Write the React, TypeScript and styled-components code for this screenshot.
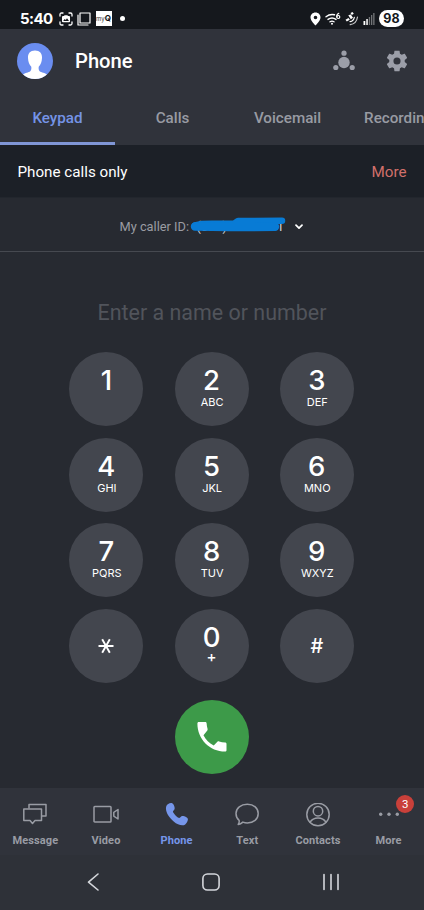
import React from 'react';
import styled, { createGlobalStyle } from 'styled-components';

const GlobalStyle = createGlobalStyle`
  * { box-sizing: border-box; }
  body { margin: 0; background: #272a31; font-family: Roboto, "Liberation Sans", sans-serif; overflow: hidden; }
  button { border: 0; padding: 0; margin: 0; background: none; color: inherit; font: inherit; }
  svg { display: block; flex: none; }
`;

const Screen = styled.main`
  width: 424px; height: 910px; overflow: hidden;
  display: flex; flex-direction: column;
  background: #272a31; color: #fff;
`;

const StatusBar = styled.div`
  height: 29px; flex: none; background: #15181d;
  display: flex; justify-content: space-between; align-items: flex-start;
  padding: 9px 20px 0 20px;
`;
const StatusGroup = styled.div<{ $gap: number }>`
  display: flex; align-items: center; gap: ${p => p.$gap}px; height: 19px;
`;
const Clock = styled.span`
  font: 700 15px/19px Inter, sans-serif; width: 34px; letter-spacing: -0.6px; white-space: nowrap;
`;
const AppBadge = styled.span`
  width: 16px; height: 15px; background: #fff; color: #333; display: flex;
  align-items: center; justify-content: center; font: 400 6px/15px Inter, sans-serif;
  b { font-size: 8px; color: #111; }
`;
const Dot = styled.span`
  width: 5px; height: 5px; border-radius: 50%; background: #fff; margin-left: 4px;
`;
const Battery = styled.span`
  width: 25px; height: 17px; border-radius: 9px; background: #fff; color: #15181d;
  font: 700 12.5px/17px Inter, sans-serif; text-align: center;
`;

const Header = styled.header`
  height: 65px; flex: none; background: #30333b;
  display: flex; align-items: center; padding: 0 16px 2px 17px;
`;
const Title = styled.h1`
  margin: 0 auto 0 22px; font-size: 20.2px; line-height: 24px; font-weight: 500;
`;
const HeaderActions = styled.div`
  display: flex; align-items: center; gap: 31px;
`;

const Tabs = styled.nav`
  height: 51px; flex: none; background: #30333b; display: flex;
`;
const Tab = styled.button<{ $active?: boolean }>`
  width: 115px; height: 51px; flex: none; text-align: center; white-space: nowrap;
  font-size: 15.2px; font-weight: 500; line-height: 48px;
  color: ${p => (p.$active ? '#7594e6' : '#989ba3')};
  border-bottom: 3px solid ${p => (p.$active ? '#8096d6' : 'transparent')};
`;

const Notice = styled.section`
  height: 53px; flex: none; background: #1c2027; padding: 2px 17.5px 0;
  display: flex; align-items: center; justify-content: space-between;
  font-size: 15.2px; border-bottom: 1px solid #22262d;
`;
const NoticeLink = styled.button`color: #d2706b;`;

const CallerRow = styled.section`
  height: 54px; flex: none; display: flex; align-items: center;
  padding: 4px 0 0 119.5px; border-bottom: 1px solid #464950;
  font-size: 12.8px; color: #9a9ca2; white-space: nowrap;
`;
const CallerLabel = styled.span`width: 69px;`;
const CallerNumber = styled.span`
  position: relative; width: 106px; height: 18px; padding-left: 8px;
  line-height: 18px; color: #d5d7dc;
  svg { position: absolute; left: 1px; top: -1px; }
`;

const Entry = styled.div`
  height: 100px; flex: none; padding-top: 48px; text-align: center;
  font-size: 21.45px; line-height: 26px; color: #51545b; white-space: nowrap;
`;
const Pad = styled.section`
  display: grid; grid-template-columns: repeat(3, 74px); grid-auto-rows: 74px;
  gap: 11.7px 31.2px; padding-left: 69.4px; flex: none;
  font-family: Inter, sans-serif;
`;
const Key = styled.button<{ $symbol?: boolean }>`
  width: 74px; height: 74px; border-radius: 50%; background: #43464e;
  display: flex; flex-direction: column; align-items: center;
  padding-top: ${p => (p.$symbol ? 0 : 13)}px;
  justify-content: ${p => (p.$symbol ? 'center' : 'flex-start')};
`;
const Digit = styled.span`font-size: 27.5px; line-height: 30px; font-weight: 500;`;
const Letters = styled.span`font-size: 11px; line-height: 14px; padding-left: 1px;`;
const Hash = styled.span`font-size: 20px; line-height: 24px; font-weight: 500;`;
const PlusLabel = styled.span`font-size: 15px; line-height: 9px; font-weight: 500;`;

const CallArea = styled.section`
  flex: 1; display: flex; justify-content: center; padding-top: 16.800px;
`;
const CallButton = styled.button`
  width: 74.5px; height: 74.5px; border-radius: 50%; background: #3d9a49;
  display: flex; align-items: center; justify-content: center;
`;

const BottomNav = styled.nav`
  height: 67px; flex: none; background: #30333b; display: grid;
  grid-template-columns: repeat(6, 70.67px);
`;
const NavItem = styled.button<{ $active?: boolean }>`
  position: relative; display: flex; flex-direction: column; align-items: center;
  padding-top: 14.500px; gap: 7.500px; font-size: 11px; line-height: 14px; font-weight: 700;
  letter-spacing: 0.1px; color: ${p => (p.$active ? '#7696ea' : '#999ca4')};
`;
const Count = styled.span`
  position: absolute; left: 43px; top: 7px; width: 18px; height: 18px; border-radius: 50%;
  background: #c9403a; color: #fff; font-size: 11.5px; line-height: 18px; font-weight: 400;
  text-align: center;
`;
const SystemNav = styled.footer`
  height: 55px; flex: none; background: #2e3138; display: flex;
  align-items: flex-start; padding: 17px 0 0 86px; gap: 102px;
`;

const Icon = ({ w, h = w, box, children }: { w: number; h?: number; box?: string; children: React.ReactNode }) => (
  <svg width={w} height={h} viewBox={box || `0 0 ${w} ${h}`} fill="none" stroke="currentColor" strokeLinecap="round" strokeLinejoin="round">
    {children}
  </svg>
);

const StatusIcons = () => (
  <>
    <Icon w={14}><g strokeWidth="1.3"><path d="M1 4V2.5Q1 1 2.5 1H4M10 1h1.500Q13 1 13 2.500V4M13 10v1.500Q13 13 11.500 13H10M4 13H2.500Q1 13 1 11.500V10" /></g><path fill="#fff" stroke="none" fillRule="evenodd" d="M4.500 4H5l.6-.7h2.800L9 4h1q1 0 1 1v4.500q0 .8-1 .8H4q-1 0-1-.8V5q0-1 1-1Zm-.3 5h5.800L8 6.300 6.800 8 5.700 7Z" /></Icon>
    <Icon w={14}><path strokeWidth="1.200" d="M3 1h10v10H3ZM1 3v10h10" /></Icon>
  </>
);

const Messages = () => <Icon w={24}><g strokeWidth="1.500"><path d="M6 5V1.500h17V13h-4" /><path d="M.8 6h17.700v11.500H12l-2.500 3-2.500-3H.8Z" /></g></Icon>;
const Video = () => <Icon w={26} h={24}><g strokeWidth="1.500"><rect x="1" y="3.500" width="17" height="15.500" rx=".8" /><path d="m20.800 9.300 4.200-2.800v9.500l-4.200-2.800Z" /></g></Icon>;
const NavPhone = () => <Icon w={24}><path fill="currentColor" stroke="none" d="M2.800 1.200C4.300.2 5.600-.1 6.700.1c1.200.2 2.300 2.100 2.800 4 .5 2-.2 2.900-1.300 3.800-.5.5-.2 1.200.4 2.100 1.300 2 2.500 3.200 4.300 4.500.9.600 1.700.7 2.200 0 .8-1.100 1.700-1.900 3.400-1.500 2.100.5 4.200 1.700 4.400 2.900.200 1.600-1 4.300-2.700 5.500-2.600 1.900-7.500.5-11.500-3C4.400 15 1.300 10.300 1 6.300.8 4.400 1.300 2.200 2.800 1.200Z" /></Icon>;
const Bubble = () => <Icon w={24}><path strokeWidth="1.500" d="M12.300 1.300c6.500 0 10.900 3.700 10.900 9.200 0 5.700-4.700 9.400-10.900 9.400-1.600 0-3.100-.3-4.400-.8-1.700 1.600-3 2.200-4.700 2.400 1-1.500 1.200-2.800.9-4.200C2 15.600 1 13.500 1 10.500c0-5.500 4.900-9.200 11.300-9.200Z" /></Icon>;
const Person = () => <Icon w={24}><g strokeWidth="1.500"><circle cx="12" cy="11.500" r="11.200" /><circle cx="12" cy="8.200" r="4.700" /><path d="M4 19.300c1.800-3 4.400-4.300 8-4.300s6.200 1.300 8 4.300" /></g></Icon>;
const Dots = () => <Icon w={24}><g fill="currentColor" stroke="none"><circle cx="3.700" cy="11.300" r="1.700" /><circle cx="12" cy="11.300" r="1.700" /><circle cx="20.300" cy="11.300" r="1.700" /></g></Icon>;

const keys = [['1', ''], ['2', 'ABC'], ['3', 'DEF'], ['4', 'GHI'], ['5', 'JKL'], ['6', 'MNO'], ['7', 'PQRS'], ['8', 'TUV'], ['9', 'WXYZ']];
const destinations = [
  { label: 'Message', icon: <Messages /> },
  { label: 'Video', icon: <Video /> },
  { label: 'Phone', icon: <NavPhone />, active: true },
  { label: 'Text', icon: <Bubble /> },
  { label: 'Contacts', icon: <Person /> },
  { label: 'More', icon: <Dots />, count: 3 },
];

export default function App() {
  return (
    <Screen>
      <GlobalStyle />
      <StatusBar>
        <StatusGroup $gap={4.5}>
          <Clock>5:40</Clock>
          <StatusIcons />
          <AppBadge>my<b>Q</b></AppBadge>
          <Dot />
        </StatusGroup>
        <StatusGroup $gap={4}>
          <Icon w={11} h={14}><path fill="#fff" stroke="none" fillRule="evenodd" d="M5.500.5C2.500.5.5 2.700.5 5.500c0 3.400 5 8 5 8s5-4.600 5-8c0-2.800-2-5-5-5Zm0 3.200a1.800 1.800 0 1 1 0 3.600 1.800 1.800 0 0 1 0-3.600Z" /></Icon>
          <Icon w={16} h={14}><path strokeWidth="1.400" d="M1 4.800Q5 1.600 9.500 2.800M3 7.400q4-2.800 8 0M5 9.800q2-1.400 4 0" /><circle cx="7" cy="11.700" r="1" fill="#fff" stroke="none" /><path strokeWidth="1.200" d="M13.800 1.300Q11.500 2.300 11.700 5" /><circle cx="13.300" cy="5" r="1.500" strokeWidth="1.200" /></Icon>
          <Icon w={14}><g fill="#fff" stroke="none"><path d="m5.500 1 2-1 1.300 1.800-2 1.200ZM.5 7.700 3.500 6l1.300 1.800-3 1.700ZM3.300 3.300l2.500-.8 2.200 3.300-2.200 1.500Z" /></g><path strokeWidth="1.200" d="M5 9.700Q8.700 9 9.300 5.300" /><path strokeWidth="1.200" opacity=".75" d="M5.200 12.600q6.300-.7 7.300-7.600" /></Icon>
          <Icon w={12} h={13}><g fill="#fff" stroke="none"><path d="M.5 9h1.800v4H.5ZM3.300 7h1.500v6H3.300Z" /><path opacity=".4" d="M5.800 5h1.300v8H5.800ZM8 3h1.300v10H8ZM10.200 1h1.300v12h-1.300Z" /></g></Icon>
          <Battery>98</Battery>
        </StatusGroup>
      </StatusBar>
      <Header>
        <svg width="36" height="36" viewBox="0 0 36 36"><defs><clipPath id="avatar"><circle cx="18" cy="18" r="18" /></clipPath></defs><g clipPath="url(#avatar)"><path fill="#6a8df0" d="M0 0h36v36H0Z" /><path fill="#fff" d="M18 7.500c4.800 0 7.300 3 7 7.500-.2 4-1.200 6.700-3.300 8.700-.3 3.500.4 4.800 3.600 5.700 2.800.7 4.600 1.600 5.700 3.100V36H5v-3.500c1.100-1.500 2.900-2.400 5.700-3.100 3.200-.9 3.900-2.200 3.600-5.700-2.100-2-3.100-4.700-3.300-8.700-.3-4.500 2.200-7.500 7-7.500Z" /></g></svg>
        <Title>Phone</Title>
        <HeaderActions>
          <svg width="22" height="21" viewBox="0 0 22 21" fill="#9b9ea8"><circle cx="11" cy="12.500" r="5.700" /><circle cx="11" cy="3.200" r="2.600" /><circle cx="2.800" cy="17.500" r="2.600" /><circle cx="19.200" cy="17.500" r="2.600" /></svg>
          <svg width="22" height="22" viewBox="1.800 1.800 20.400 20.400" fill="#9b9ea8"><path d="M19.140 12.940c.04-.3.060-.61.060-.94 0-.32-.02-.64-.07-.94l2.030-1.580c.18-.14.230-.41.120-.61l-1.920-3.320c-.12-.22-.37-.29-.59-.22l-2.390.96c-.5-.38-1.030-.7-1.620-.94l-.36-2.540c-.04-.24-.24-.41-.48-.41h-3.840c-.24 0-.43.170-.47.410l-.36 2.540c-.59.240-1.130.57-1.620.94l-2.390-.96c-.22-.08-.47 0-.59.220L2.740 8.870c-.12.210-.08.470.12.610l2.030 1.580c-.05.3-.09.630-.09.940s.02.640.070.940l-2.030 1.580c-.18.140-.23.410-.12.610l1.920 3.320c.12.220.37.290.59.220l2.390-.96c.5.380 1.030.7 1.620.94l.36 2.540c.05.240.24.410.48.410h3.840c.24 0 .44-.17.470-.41l.36-2.540c.59-.24 1.130-.56 1.620-.94l2.390.96c.22.080.47 0 .59-.22l1.920-3.320c.12-.22.070-.47-.12-.61l-2.010-1.580ZM12 15.300a3.300 3.300 0 1 1 0-6.600 3.300 3.300 0 0 1 0 6.600Z" /></svg>
        </HeaderActions>
      </Header>
      <Tabs>
        <Tab $active>Keypad</Tab><Tab>Calls</Tab><Tab>Voicemail</Tab><Tab>Recordings</Tab>
      </Tabs>
      <Notice><span>Phone calls only</span><NoticeLink>More</NoticeLink></Notice>
      <CallerRow>
        <CallerLabel>My caller ID:</CallerLabel>
        <CallerNumber>
          (000) 000-0001
          <svg width="100" height="18" viewBox="0 0 100 18"><path d="M5 8.500 12 7l10-.2 22-.2 4-2.600 44-.2" fill="none" stroke="#087bd5" strokeWidth="6.500" strokeLinecap="round" strokeLinejoin="round" /><path d="m5 9.500 34 .4 24 .2 22-.4" fill="none" stroke="#087bd5" strokeWidth="8.500" strokeLinecap="round" /></svg>
        </CallerNumber>
        <Icon w={8} h={6}><path stroke="#fff" strokeWidth="1.700" d="m1 1.200 3 3 3-3" /></Icon>
      </CallerRow>
      <Entry>Enter a name or number</Entry>
      <Pad>
        {keys.map(([digit, letters]) => <Key key={digit}><Digit>{digit}</Digit>{letters && <Letters>{letters}</Letters>}</Key>)}
        <Key $symbol aria-label="star"><Icon w={16}><path strokeWidth="1.900" strokeLinecap="butt" d="M.5 8h15M4.200 1.200l7.600 13.600M11.800 1.200 4.200 14.800" /></Icon></Key>
        <Key><Digit>0</Digit><PlusLabel>+</PlusLabel></Key>
        <Key $symbol><Hash>#</Hash></Key>
      </Pad>
      <CallArea>
        <CallButton aria-label="Call"><svg width="30" height="30" viewBox="0 0 30 30" fill="#fff"><path d="M1.700 0h6.500c.8 0 1.300.5 1.400 1.300.1 2 .5 3.900 1 5.700.1.600 0 1.200-.5 1.700L6.500 13.300c2.400 4.500 5.600 7.800 10.200 10.200l3.700-3.700c.5-.5 1.100-.6 1.700-.4 1.900.6 3.900.9 6 1 .8 0 1.400.6 1.400 1.400v6.400c0 .8-.6 1.400-1.400 1.400C12.700 29.600.4 17.300.4 1.500.4.600.9 0 1.700 0Z" /></svg></CallButton>
      </CallArea>
      <BottomNav>
        {destinations.map(({ label, icon, active, count }) => (
          <NavItem key={label} $active={active}>{icon}<span>{label}</span>{count && <Count>{count}</Count>}</NavItem>
        ))}
      </BottomNav>
      <SystemNav>
        <Icon w={14} h={20}><path stroke="#d4d6db" strokeWidth="1.600" d="M12 2 2.500 10.200 12 18" /></Icon>
        <Icon w={18} h={20}><rect stroke="#d4d6db" strokeWidth="1.600" x=".9" y="2" width="16.200" height="16" rx="4.500" /></Icon>
        <Icon w={18} h={20}><path stroke="#d4d6db" strokeWidth="1.600" d="M2 2.500v15M9 2.500v15M16 2.500v15" /></Icon>
      </SystemNav>
    </Screen>
  );
}
